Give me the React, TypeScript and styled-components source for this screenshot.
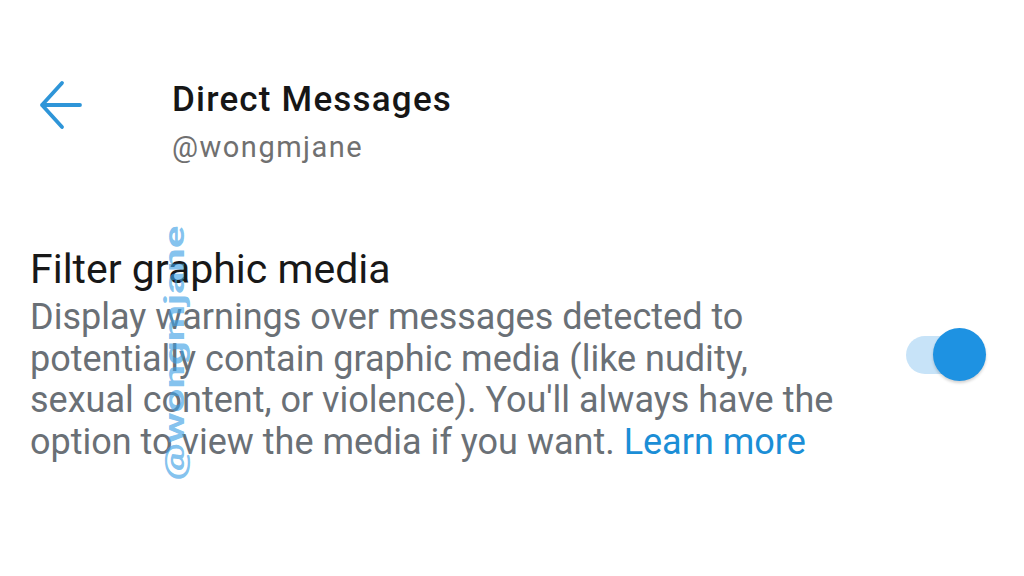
import React from "react";
import styled, { createGlobalStyle } from "styled-components";

const Global = createGlobalStyle`
  html, body { margin: 0; padding: 0; background: #ffffff; }
  body { width: 1024px; height: 576px; overflow: hidden; font-family: Roboto, "Liberation Sans", sans-serif; }
`;

const Page = styled.div`
  position: relative;
  width: 1024px;
  height: 576px;
  background: #ffffff;
  display: flex;
  flex-direction: column;
`;

const Header = styled.header`
  display: flex;
  align-items: flex-start;
  padding: 80px 0 0 38px;
  gap: 90px;
`;

const BackButton = styled.button`
  border: none;
  background: transparent;
  padding: 0;
  width: 44px;
  height: 50px;
  display: flex;
  align-items: center;
  justify-content: center;
  cursor: pointer;
`;

const TitleBlock = styled.div`
  display: flex;
  flex-direction: column;
`;

const Title = styled.h1`
  margin: 0;
  font-family: Roboto, sans-serif;
  font-weight: 500;
  font-size: 35px;
  line-height: 40px;
  letter-spacing: 1.2px;
  color: #161616;
`;

const Handle = styled.div`
  font-family: Roboto, sans-serif;
  font-size: 29px;
  line-height: 36px;
  letter-spacing: 1.5px;
  color: #707070;
  margin-top: 9px;
`;

const Setting = styled.section`
  display: flex;
  align-items: center;
  justify-content: space-between;
  padding: 81px 38px 0 30px;
`;

const SettingText = styled.div`
  display: flex;
  flex-direction: column;
  width: 815px;
`;

const SettingTitle = styled.div`
  font-family: Roboto, sans-serif;
  font-size: 41px;
  line-height: 46px;
  color: #181818;
`;

const SettingDesc = styled.p`
  margin: 5px 0 0;
  font-family: Roboto, sans-serif;
  font-size: 36px;
  line-height: 41.5px;
  color: #6a7076;
`;

const Link = styled.a`
  color: #1b8ed6;
  text-decoration: none;
`;

const Toggle = styled.div`
  position: relative;
  width: 80px;
  height: 54px;
  flex-shrink: 0;
`;

const Track = styled.div`
  position: absolute;
  left: 0;
  top: 8px;
  width: 64px;
  height: 38px;
  border-radius: 19px;
  background: #c7e3f8;
`;

const Thumb = styled.div`
  position: absolute;
  right: 0;
  top: 0;
  width: 53px;
  height: 53px;
  border-radius: 50%;
  background: #1e92e2;
  box-shadow: 0 2px 3px rgba(0, 0, 0, 0.18);
`;

const Watermark = styled.div`
  position: absolute;
  left: 175px;
  top: 353px;
  transform: translate(-50%, -50%) rotate(-90deg) scaleX(1.55);
  font-family: Roboto, sans-serif;
  font-weight: 700;
  font-size: 27px;
  color: rgba(60, 160, 228, 0.65);
  white-space: nowrap;
  pointer-events: none;
`;

export default function App() {
  return (
    <Page>
      <Global />
      <Header>
        <BackButton aria-label="Back">
          <svg width="44" height="50" viewBox="0 0 44 50" fill="none">
            <path
              d="M42 25H4M24 3L4 25L24 47"
              stroke="#2e95d8"
              strokeWidth="3.8"
              strokeLinecap="round"
              strokeLinejoin="round"
            />
          </svg>
        </BackButton>
        <TitleBlock>
          <Title>Direct Messages</Title>
          <Handle>@wongmjane</Handle>
        </TitleBlock>
      </Header>
      <Setting>
        <SettingText>
          <SettingTitle>Filter graphic media</SettingTitle>
          <SettingDesc>
            Display warnings over messages detected to potentially contain graphic media (like nudity, sexual content, or violence). You'll always have the option to view the media if you want.{" "}
            <Link href="#">Learn more</Link>
          </SettingDesc>
        </SettingText>
        <Toggle>
          <Track />
          <Thumb />
        </Toggle>
      </Setting>
      <Watermark>@wongmjane</Watermark>
    </Page>
  );
}
